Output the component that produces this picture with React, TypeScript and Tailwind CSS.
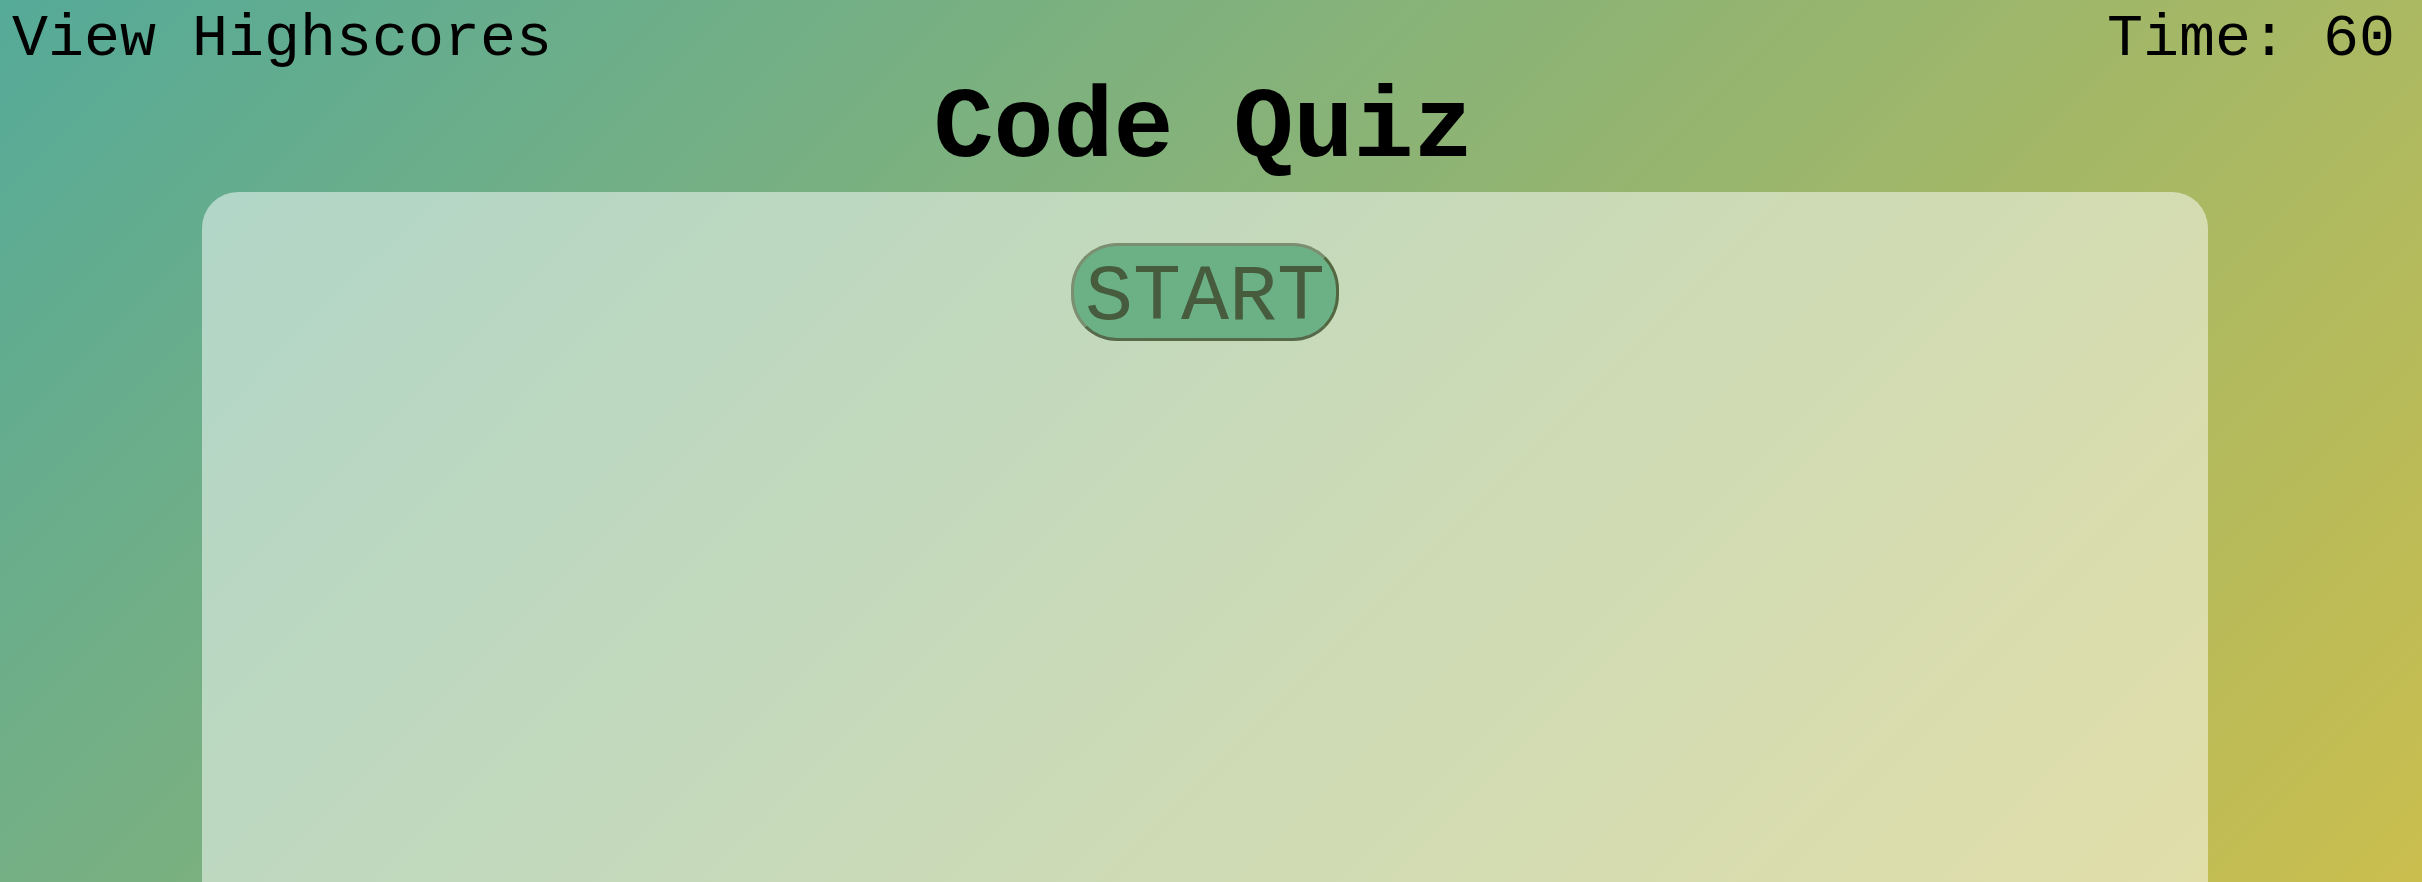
import React from 'react';

const mono = "font-['Liberation_Mono','Courier_New',monospace]";

export default function App() {
  return (
    <div className={`h-[882px] w-full overflow-hidden bg-[linear-gradient(135deg,#55aa98,#cabe4e)] text-black ${mono}`}>
      <div className="mr-[15px]">
        {/* Header */}
        <header className="flex justify-between px-[12px] pt-[9px] text-[60px] leading-[60px]">
          <a className="cursor-pointer">View Highscores</a>
          <span>Time: 60</span>
        </header>

        <h1 className="mt-[11px] text-center text-[100px] font-bold leading-[100px]">Code Quiz</h1>

        {/* Quiz card */}
        <main className="ml-[202px] mt-[12px] flex h-[760px] w-[2006px] flex-col items-center rounded-[36px] bg-white/50">
          <button
            className="mt-[51px] flex h-[98px] w-[268px] items-center justify-center rounded-[46px] border-[3px] border-t-[#7b8f70] border-l-[#7b8f70] border-r-[#52673f] border-b-[#566a4a] bg-[#6cb086] pt-[12px] text-[80px] leading-[80px] text-[#465c3d]"
          >
            START
          </button>
        </main>
      </div>
    </div>
  );
}
